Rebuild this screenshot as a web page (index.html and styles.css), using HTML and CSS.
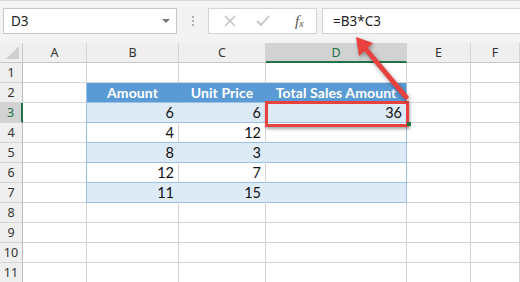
FILE: index.html
```
<!DOCTYPE html>
<html>
<head>
<meta charset="utf-8">
<link rel="stylesheet" href="styles.css">
</head>
<body>
<div class="app">
  <div class="topbar">
    <div class="namebox"><span class="ref">D3</span><span class="drop"></span></div>
    <div class="sep"><span></span><span></span><span></span></div>
    <div class="btns">
      <svg class="ic" width="14" height="14" viewBox="0 0 14 14"><path d="M2 2 L12 12 M12 2 L2 12" stroke="#c4c4c4" stroke-width="1.6" fill="none"/></svg>
      <svg class="ic" width="16" height="14" viewBox="0 0 16 14"><path d="M2 7 L6 11 L14 2" stroke="#c4c4c4" stroke-width="1.8" fill="none"/></svg>
      <span class="fx">f<sub>x</sub></span>
    </div>
    <div class="formula">=B3*C3</div>
  </div>
  <div class="sheet">
    <div class="hd corner"><span class="tri"></span></div>
    <div class="hd col">A</div>
    <div class="hd col">B</div>
    <div class="hd col">C</div>
    <div class="hd col sel">D</div>
    <div class="hd col">E</div>
    <div class="hd col">F</div>

    <div class="hd row">1</div>
    <div class="c"></div><div class="c"></div><div class="c"></div><div class="c"></div><div class="c"></div><div class="c"></div>

    <div class="hd row">2</div>
    <div class="c"></div>
    <div class="c th tl">Amount</div>
    <div class="c th">Unit Price</div>
    <div class="c th tr">Total Sales Amount</div>
    <div class="c"></div><div class="c"></div>

    <div class="hd row rsel">3</div>
    <div class="c"></div>
    <div class="c n band tl">6</div>
    <div class="c n band">6</div>
    <div class="c n band tr">36</div>
    <div class="c"></div><div class="c"></div>

    <div class="hd row">4</div>
    <div class="c"></div>
    <div class="c n plain tl">4</div>
    <div class="c n plain">12</div>
    <div class="c n plain tr"></div>
    <div class="c"></div><div class="c"></div>

    <div class="hd row">5</div>
    <div class="c"></div>
    <div class="c n band tl">8</div>
    <div class="c n band">3</div>
    <div class="c n band tr"></div>
    <div class="c"></div><div class="c"></div>

    <div class="hd row">6</div>
    <div class="c"></div>
    <div class="c n plain tl">12</div>
    <div class="c n plain">7</div>
    <div class="c n plain tr"></div>
    <div class="c"></div><div class="c"></div>

    <div class="hd row">7</div>
    <div class="c"></div>
    <div class="c n band tl">11</div>
    <div class="c n band">15</div>
    <div class="c n band tr"></div>
    <div class="c"></div><div class="c"></div>

    <div class="hd row">8</div>
    <div class="c"></div><div class="c"></div><div class="c"></div><div class="c"></div><div class="c"></div><div class="c"></div>
    <div class="hd row">9</div>
    <div class="c"></div><div class="c"></div><div class="c"></div><div class="c"></div><div class="c"></div><div class="c"></div>
    <div class="hd row">10</div>
    <div class="c"></div><div class="c"></div><div class="c"></div><div class="c"></div><div class="c"></div><div class="c"></div>
    <div class="hd row">11</div>
    <div class="c"></div><div class="c"></div><div class="c"></div><div class="c"></div><div class="c"></div><div class="c"></div>
  </div>
  <div class="redbox"></div>
  <div class="handle"></div>
  <svg class="arrow" width="520" height="282" viewBox="0 0 520 282">
    <line x1="406" y1="97" x2="364" y2="47" stroke="#e8413e" stroke-width="5" stroke-linecap="round"/>
    <polygon points="356,37 373,43 359,56" fill="#e8413e"/>
  </svg>
</div>
</body>
</html>
```
FILE: styles.css
```
* { box-sizing: border-box; }
html, body { margin: 0; padding: 0; }
body { width: 520px; height: 282px; overflow: hidden; background: #fff; }
.app { position: relative; width: 520px; height: 282px; overflow: hidden; }

.topbar {
  height: 43px;
  background: #f3f3f3;
  border-top: 1px solid #d9d9d9;
  display: flex;
  align-items: flex-start;
  padding: 7px 0 0 3px;
  font-family: "Noto Sans", "Open Sans", sans-serif;
}
.namebox {
  width: 174px; height: 26px;
  background: #fff; border: 1px solid #c8c8c8;
  display: flex; align-items: center; justify-content: space-between;
  padding: 0 6px 0 7px;
  font-size: 13.5px; color: #222;
}
.drop { width: 0; height: 0; border-left: 4px solid transparent; border-right: 4px solid transparent; border-top: 4px solid #777; }
.sep { width: 31px; height: 26px; display: flex; flex-direction: column; align-items: center; justify-content: center; gap: 2px; }
.sep span { width: 2px; height: 2px; background: #b0b0b0; }
.btns {
  width: 109px; height: 26px;
  background: #fff; border: 1px solid #d4d4d4;
  display: flex; align-items: center;
  padding-left: 14px; gap: 18px;
}
.fx { font-family: "Liberation Serif", serif; font-style: italic; font-size: 15px; color: #555; margin-left: 6px; line-height: 1; }
.fx sub { font-size: 10px; vertical-align: -1px; }
.formula {
  flex: 1; height: 26px; margin-left: 5px;
  background: #fff; border: 1px solid #d4d4d4; border-right: none;
  display: flex; align-items: center; padding-left: 10px;
  font-size: 13.5px; color: #222;
}

.sheet {
  display: grid;
  grid-template-columns: 23px 64px 92px 87px 141px 64px 49px;
  grid-template-rows: 20px repeat(11, 20px);
  font-family: "Lato", "Open Sans", sans-serif;
}
.c { border-right: 1px solid #d4d4d4; border-bottom: 1px solid #d4d4d4; background: #fff; font-size: 14.5px; color: #111; line-height: 19px; }
.hd {
  background: #efefef; border-right: 1px solid #c8c8c8; border-bottom: 1px solid #c8c8c8;
  font-family: "Noto Sans", "Open Sans", sans-serif; font-size: 12.5px; color: #333;
  display: flex; align-items: center; justify-content: center;
}
.hd.col { border-right-color: #d4d4d4; }
.hd.row { border-right-color: #bdbdbd; border-bottom-color: #d4d4d4; }
.hd.sel { background: #d2d2d2; color: #217346; border-bottom: 2px solid #217346; }
.hd.rsel { background: #d2d2d2; color: #217346; border-right: 2px solid #217346; }
.corner { position: relative; }
.tri { position: absolute; right: 3px; bottom: 3px; width: 0; height: 0; border-left: 13px solid transparent; border-bottom: 13px solid #cfcfcf; }

.th { background: #5b9bd5; color: #fff; font-weight: 700; text-align: center; border-right-color: #5b9bd5; border-bottom-color: #9bc2e6; font-size: 14px; letter-spacing: 0.1px; }
.n { text-align: right; padding-right: 4px; border-bottom-color: #9bc2e6; }
.band { background: #ddebf7; border-right-color: #ddebf7; }
.plain { background: #fff; }
.tl { border-left: 1px solid #9bc2e6; margin-left: -1px; }
.tr { border-right: 1px solid #9bc2e6; }
.th.tr { border-right-color: #9bc2e6; }
.band.tr, .plain.tr { border-right-color: #9bc2e6; }

.redbox {
  position: absolute; left: 265px; top: 101px; width: 144px; height: 26px;
  border: 3px solid #e8413e;
  box-shadow: 1px 2px 3px rgba(0,0,0,0.35);
}
.handle { position: absolute; left: 407px; top: 122px; width: 4px; height: 4px; background: #217346; }
.arrow { position: absolute; left: 0; top: 0; filter: drop-shadow(1px 2px 2px rgba(0,0,0,0.35)); }
```
